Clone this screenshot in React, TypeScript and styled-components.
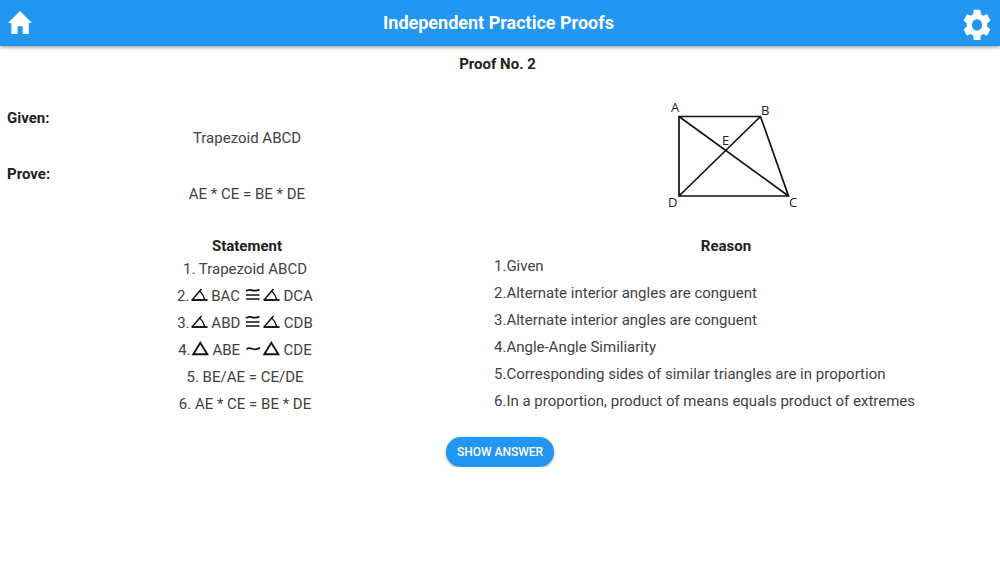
import React from "react";
import styled, { createGlobalStyle } from "styled-components";

const GlobalStyle = createGlobalStyle`
  *, *::before, *::after { box-sizing: border-box; }
  body {
    margin: 0;
    background: #fff;
    color: #424242;
    font-family: Roboto, "Liberation Sans", sans-serif;
    font-size: 15px;
    line-height: 20px;
  }
`;

const TopBar = styled.header`
  display: grid;
  grid-template-columns: 40px 1fr 40px;
  align-items: center;
  height: 46px;
  padding-right: 3px;
  background: #2196f3;
  color: #fff;
  box-shadow: 0 1px 4px rgba(0, 0, 0, 0.45);
`;

const Title = styled.h1`
  margin: 0;
  font-size: 18px;
  font-weight: 700;
  line-height: 24px;
  text-align: center;
`;

const IconButton = styled.button`
  display: flex;
  align-items: center;
  justify-content: center;
  height: 42px;
  padding: 0;
  border: 0;
  background: none;
  color: inherit;
  cursor: pointer;
`;

const Page = styled.main`
  padding: 8px 7px 0;
`;

const ProofHeading = styled.h2`
  margin: 0;
  padding-right: 5px;
  color: #212121;
  font-size: 15px;
  font-weight: 700;
  line-height: 20px;
  text-align: center;
`;

const Columns = styled.div<{ $top: number }>`
  display: grid;
  grid-template-columns: 30fr 29fr;
  column-gap: 7px;
  padding: ${(p) => p.$top}px 35px 0 0;
`;

const Facts = styled.dl`
  margin: 0;
  padding-top: 12px;
`;

const Term = styled.dt`
  color: #212121;
  font-weight: 700;
  line-height: 20px;
`;

const Detail = styled.dd`
  margin: 0 0 16px;
  line-height: 20px;
  text-align: center;
`;

const Figure = styled.svg`
  display: block;
  width: 154px;
  height: 124px;
  margin: 0 auto;
  font-family: "Open Sans", sans-serif;
  font-size: 13px;
  fill: #212121;
`;

const ColumnHeading = styled.h3`
  margin: 0;
  color: #212121;
  font-size: 15px;
  font-weight: 700;
  line-height: 20px;
  text-align: center;
`;

const Steps = styled.ol<{ $centered?: boolean }>`
  display: grid;
  row-gap: 7px;
  margin: 0;
  padding: ${(p) => (p.$centered ? "3px 4px 0 0" : "0")};
  list-style: none;
  white-space: nowrap;
  text-align: ${(p) => (p.$centered ? "center" : "left")};
`;

const StepRow = styled.li`
  height: 20px;
`;

const Glyph = styled.svg`
  display: inline-block;
  width: 18px;
  height: 15px;
  vertical-align: -1px;
  fill: none;
  stroke: #111;
`;

const Actions = styled.div`
  display: flex;
  justify-content: center;
  padding-top: 23px;
`;

const AnswerButton = styled.button`
  height: 30px;
  padding: 0 11px;
  border: 0;
  border-radius: 15px;
  background: #2196f3;
  color: #fff;
  font: 500 12px/30px Roboto, "Liberation Sans", sans-serif;
  text-transform: uppercase;
  box-shadow: 0 1px 3px rgba(0, 0, 0, 0.4);
  cursor: pointer;
`;

const Angle = () => (
  <Glyph viewBox="0 0 18 15" role="img" aria-label="angle">
    <path d="M17.500 13H1.500" strokeWidth="1.900" />
    <path d="M2 13L11.500 2" strokeWidth="1.500" />
    <path d="M9 3.500C11.500 5.500 13.500 8 14.500 12.500" strokeWidth="1.300" />
  </Glyph>
);

const Triangle = () => (
  <Glyph viewBox="0 0 18 15" role="img" aria-label="triangle">
    <path d="M2.300 13.200H16.300L9.300 1.800Z" strokeWidth="1.900" />
  </Glyph>
);

const Congruent = () => (
  <Glyph viewBox="0 0 18 15" role="img" aria-label="is congruent to">
    <path d="M2 4.200C4.500 1.800 6.500 3 8.500 3.400S12.500 4.200 15.500 2.600M2 8H15.500M2 12H15.500" strokeWidth="1.700" />
  </Glyph>
);

const Similar = () => (
  <Glyph viewBox="0 0 18 15" role="img" aria-label="is similar to">
    <path d="M2.500 8.500C4.500 5.800 7 7.300 9 8S13.500 8.500 16 6.800" strokeWidth="1.700" />
  </Glyph>
);

const statements: React.ReactNode[] = [
  "1. Trapezoid ABCD",
  <>2.<Angle /> BAC <Congruent /><Angle /> DCA</>,
  <>3.<Angle /> ABD <Congruent /><Angle /> CDB</>,
  <>4.<Triangle /> ABE <Similar /><Triangle /> CDE</>,
  "5. BE/AE = CE/DE",
  "6. AE * CE = BE * DE",
];

const reasons = [
  "1.Given",
  "2.Alternate interior angles are conguent",
  "3.Alternate interior angles are conguent",
  "4.Angle-Angle Similiarity",
  "5.Corresponding sides of similar triangles are in proportion",
  "6.In a proportion, product of means equals product of extremes",
];

export default function App() {
  return (
    <>
      <GlobalStyle />
      <TopBar>
        <IconButton type="button" aria-label="Home">
          <svg width="24" height="24" viewBox="0 0 24 24" fill="currentColor">
            <path d="M12 0L24 12H20.800V23H14.600V15.300H9.600V23H3.400V12H0Z" />
          </svg>
        </IconButton>
        <Title>Independent Practice Proofs</Title>
        <IconButton type="button" aria-label="Settings">
          <svg width="34" height="38" viewBox="0 -1.200 24 24" preserveAspectRatio="none" fill="currentColor">
            <path d="M19.140 12.940c.04-.3.060-.61.060-.94 0-.32-.02-.64-.07-.94l2.030-1.580c.18-.14.230-.41.120-.61l-1.920-3.320c-.12-.22-.37-.29-.59-.22l-2.390.96c-.5-.38-1.030-.7-1.620-.94l-.36-2.540c-.04-.24-.24-.41-.48-.41h-3.840c-.24 0-.43.170-.47.410l-.36 2.540c-.59.240-1.130.570-1.620.940l-2.390-.96c-.22-.08-.47 0-.59.220L2.740 8.870c-.12.210-.08.470.120.610l2.030 1.580c-.05.300-.09.630-.09.940s.02.640.070.940l-2.030 1.580c-.18.140-.23.410-.12.610l1.920 3.320c.12.220.370.290.590.220l2.390-.96c.5.380 1.030.7 1.620.940l.36 2.540c.05.240.240.410.480.410h3.840c.24 0 .44-.17.470-.41l.36-2.540c.59-.24 1.130-.56 1.620-.94l2.390.96c.22.080.470 0 .59-.22l1.920-3.320c.12-.22.070-.47-.12-.61l-2.010-1.580zM12 15.600c-1.980 0-3.600-1.620-3.600-3.600s1.620-3.600 3.600-3.600 3.600 1.620 3.600 3.600-1.620 3.600-3.600 3.600z" />
          </svg>
        </IconButton>
      </TopBar>

      <Page>
        <ProofHeading>Proof No. 2</ProofHeading>

        <Columns $top={22}>
          <Facts>
            <Term>Given:</Term>
            <Detail>Trapezoid ABCD</Detail>
            <Term>Prove:</Term>
            <Detail>AE * CE = BE * DE</Detail>
          </Facts>
          <Figure viewBox="-14 -4 154 124" role="img" aria-label="Trapezoid ABCD with diagonals meeting at E">
            <path
              d="M16 16.500H97.500L125.500 96H16ZL125.500 96M97.500 16.500L16 96"
              fill="none"
              stroke="#111"
              strokeWidth="1.700"
            />
            <text x="8" y="12">A</text>
            <text x="98" y="15">B</text>
            <text x="59" y="45">E</text>
            <text x="5" y="107">D</text>
            <text x="126" y="107">C</text>
          </Figure>
        </Columns>

        <Columns $top={16}>
          <section>
            <ColumnHeading>Statement</ColumnHeading>
            <Steps $centered>
              {statements.map((s, i) => (
                <StepRow key={i}>{s}</StepRow>
              ))}
            </Steps>
          </section>
          <section>
            <ColumnHeading>Reason</ColumnHeading>
            <Steps>
              {reasons.map((r, i) => (
                <StepRow key={i}>{r}</StepRow>
              ))}
            </Steps>
          </section>
        </Columns>

        <Actions>
          <AnswerButton type="button">Show answer</AnswerButton>
        </Actions>
      </Page>
    </>
  );
}
